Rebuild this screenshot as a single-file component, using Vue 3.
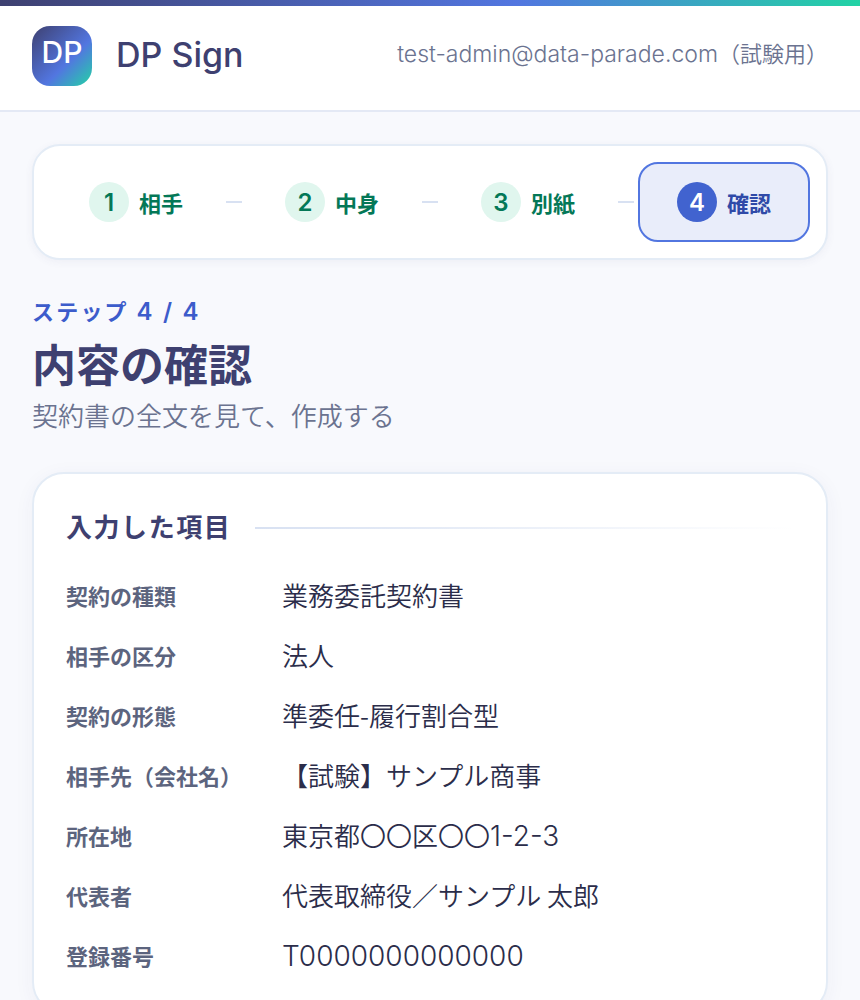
<template>
  <div class="app">
    <header class="app-header">
      <a href="#" class="brand">
        <span class="brand-logo">DP</span>
        <span class="brand-name">DP Sign</span>
      </a>
      <span class="account">
        <span class="mail">test-admin@data-parade.com</span>（試験用）
      </span>
    </header>

    <main class="content">
      <nav class="steps">
        <template v-for="(step, idx) in steps" :key="step">
          <span v-if="idx > 0" class="step-line"></span>
          <button
            type="button"
            class="step"
            :class="{ active: current === idx + 1, done: current > idx + 1 }"
            @click="current = idx + 1"
          >
            <span class="step-no">{{ idx + 1 }}</span>
            <span class="step-label">{{ step }}</span>
          </button>
        </template>
      </nav>

      <div class="page-head">
        <p class="eyebrow">
          ステップ <span class="count">{{ current }} / {{ steps.length }}</span>
        </p>
        <h1>内容の確認</h1>
        <p class="lead">契約書の全文を見て、作成する</p>
      </div>

      <section class="card">
        <h2>入力した項目</h2>
        <dl class="fields">
          <div v-for="field in fields" :key="field.label" class="field">
            <dt>{{ field.label }}</dt>
            <dd>
              <span
                v-for="(part, idx) in split(field.value)"
                :key="idx"
                :class="isCode(part) ? 'code' : 'jp'"
                >{{ part }}</span
              >
            </dd>
          </div>
        </dl>
      </section>
    </main>
  </div>
</template>

<script setup>
import { ref } from "vue";

const steps = ["相手", "中身", "別紙", "確認"];
const current = ref(4);

const fields = [
  { label: "契約の種類", value: "業務委託契約書" },
  { label: "相手の区分", value: "法人" },
  { label: "契約の形態", value: "準委任-履行割合型" },
  { label: "相手先（会社名）", value: "【試験】サンプル商事" },
  { label: "所在地", value: "東京都〇〇区〇〇1-2-3" },
  { label: "代表者", value: "代表取締役／サンプル 太郎" },
  { label: "登録番号", value: "T0000000000000" },
];

// numbers and codes are set a little larger than the Japanese text
function split(value) {
  return value.split(/([A-Z0-9][A-Z0-9-]*)/).filter(Boolean);
}

function isCode(part) {
  return /^[A-Z0-9]/.test(part);
}
</script>

<style>
body {
  margin: 0;
  background: #f8f9fd;
}
</style>

<style scoped>
.app {
  min-height: 100vh;
  color: #2b2d4a;
  font-family: Inter, "Noto Sans CJK JP", sans-serif;
  font-size: 26px;
  font-weight: 350;
}

.app-header {
  position: relative;
  display: flex;
  align-items: flex-start;
  justify-content: space-between;
  padding: 26px 32px 24px;
  background: #fff;
  border-bottom: 2px solid #e4e9f5;
}

.app-header::before {
  content: "";
  position: absolute;
  top: 0;
  left: 0;
  right: 0;
  height: 6px;
  background: linear-gradient(90deg, #3e4070, #5276e0 60%, #22d3a5);
}

.brand {
  display: flex;
  gap: 24px;
  color: #3e4070;
  text-decoration: none;
}

.brand-logo {
  width: 60px;
  height: 60px;
  border-radius: 18px;
  background: linear-gradient(135deg, #3e4070, #5276e0 60%, #22d3a5);
  color: #fff;
  font-size: 30px;
  font-weight: 500;
  line-height: 52px;
  text-align: center;
}

.brand-name {
  font-size: 34px;
  font-weight: 500;
  line-height: 58px;
}

.account {
  color: #6b7390;
  font-size: 22px;
  line-height: 56px;
}

.mail {
  font-size: 23px;
}

.content {
  padding: 32px;
}

.steps {
  display: flex;
  align-items: center;
  padding: 16px;
  background: #fff;
  border: 2px solid #e4ecf6;
  border-radius: 28px;
  box-shadow: 0 2px 8px rgba(62, 64, 112, 0.06);
}

.step {
  flex: 1;
  display: flex;
  align-items: center;
  justify-content: center;
  gap: 10px;
  height: 80px;
  padding: 0;
  border: 2px solid transparent;
  border-radius: 20px;
  background: none;
  color: #6b7390;
  font-family: inherit;
  font-size: 22px;
  font-weight: 600;
  cursor: pointer;
}

.step.done {
  color: #047857;
}

.step.active {
  color: #2f4aa8;
  background: #e9edfa;
  border-color: #5276e0;
}

.step-no {
  width: 40px;
  height: 40px;
  border-radius: 50%;
  background: #eef1f8;
  font-size: 24px;
  line-height: 42px;
}

.step.done .step-no {
  background: #e0f6ee;
}

.step.active .step-no {
  background: #4163cf;
  color: #fff;
}

.step-line {
  width: 16px;
  height: 2px;
  margin: 0 4px;
  background: #d8e1f2;
}

.page-head {
  margin: 32px 0 38px;
}

.eyebrow {
  margin: 0;
  color: #3c5ccb;
  font-size: 22px;
  font-weight: 600;
  line-height: 40px;
  letter-spacing: 0.1em;
}

.count {
  font-size: 24px;
  line-height: 1;
}

h1 {
  margin: 0;
  color: #3e4070;
  font-size: 44px;
  font-weight: 600;
  line-height: 68px;
}

.lead {
  margin: 0;
  color: #6b7390;
  line-height: 34px;
}

.card {
  padding: 32px;
  background: #fff;
  border: 2px solid #e4ecf6;
  border-radius: 32px;
  box-shadow: 0 4px 20px rgba(62, 64, 112, 0.05);
}

h2 {
  display: flex;
  align-items: center;
  gap: 24px;
  margin: 0 0 24px;
  color: #3e4070;
  font-size: 26px;
  font-weight: 600;
  line-height: 44px;
  letter-spacing: 0.06em;
}

h2::after {
  content: "";
  flex: 1;
  height: 2px;
  background: linear-gradient(90deg, #d8e1f2, transparent);
}

.fields {
  display: grid;
  gap: 14px;
  margin: 0;
}

.field {
  display: grid;
  grid-template-columns: 200px 1fr;
  gap: 16px;
  line-height: 46px;
}

dt {
  color: #5c647e;
  font-size: 22px;
  font-weight: 600;
}

dd {
  margin: 0;
}

.jp,
.code {
  line-height: 1;
}

.jp {
  font-family: "Noto Sans CJK JP", sans-serif;
}

.code {
  font-size: 28px;
}
</style>
